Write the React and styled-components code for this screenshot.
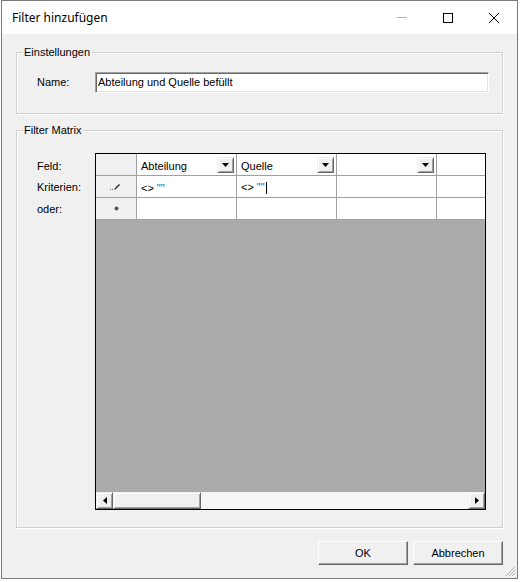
import React from 'react';
import styled, { createGlobalStyle } from 'styled-components';

const GlobalStyle = createGlobalStyle`
  html, body {
    margin: 0;
    padding: 0;
    background: #ffffff;
  }
  * { box-sizing: border-box; }
`;

const Window = styled.div`
  position: relative;
  margin-left: 1px;
  width: 517px;
  height: 579px;
  border: 1px solid #7a7a7a;
  background: #f0f0f0;
  display: flex;
  flex-direction: column;
  font-family: "Liberation Sans", Arial, sans-serif;
  font-size: 11px;
  color: #000;
`;

const TitleBar = styled.div`
  height: 33px;
  background: #ffffff;
  display: flex;
  align-items: center;
  padding-left: 10px;
`;

const Title = styled.div`
  flex: 1;
  font-family: "Noto Sans", "Open Sans", sans-serif;
  font-size: 12px;
  color: #000;
  padding-bottom: 1px;
`;

const CaptionButton = styled.div`
  width: 46px;
  height: 33px;
  display: flex;
  align-items: center;
  justify-content: center;
`;

const Content = styled.div`
  flex: 1;
  display: flex;
  flex-direction: column;
  padding: 0 14px;
`;

const Group = styled.div`
  position: relative;
  margin-top: ${p => p.$top}px;
  height: ${p => p.$height}px;
  border: 1px solid #d0d0d0;
  box-shadow: inset 1px 1px 0 #ffffff, 1px 1px 0 #ffffff;
  padding: ${p => p.$pad};
  display: flex;
`;

const Legend = styled.span`
  position: absolute;
  top: -8px;
  left: 6px;
  padding: 0 2px 0 1px;
  background: #f0f0f0;
  line-height: 14px;
`;

const Label = styled.div`
  width: 58px;
  line-height: ${p => p.$lh || 21}px;
`;

const TextInput = styled.div`
  width: 394px;
  height: 21px;
  background: #fff;
  border: 1px solid;
  border-color: #a0a0a0 #ffffff #ffffff #a0a0a0;
  box-shadow: inset 1px 1px 0 #696969, inset -1px -1px 0 #e3e3e3;
  padding: 0 0 0 2px;
  line-height: 19px;
`;

const LabelColumn = styled.div`
  display: flex;
  flex-direction: column;
  padding-top: 2px;
`;

const GridBox = styled.div`
  width: 391px;
  height: 357px;
  border: 1px solid #000;
  display: flex;
  flex-direction: column;
  overflow: hidden;
`;

const Table = styled.div`
  display: grid;
  grid-template-columns: 41px repeat(4, 100px);
  grid-auto-rows: 22px;
  background: #fff;
`;

const Cell = styled.div`
  border-right: 1px solid #a0a0a0;
  border-bottom: 1px solid #a0a0a0;
  background: ${p => (p.$header ? '#f0f0f0' : '#ffffff')};
  display: flex;
  align-items: center;
  justify-content: ${p => (p.$header ? 'center' : 'space-between')};
  padding-left: ${p => (p.$header ? 0 : 4)}px;
  white-space: nowrap;
`;

const CellText = styled.span`
  padding-top: 2px;
`;

const DropButton = styled.div`
  width: 17px;
  height: 16px;
  margin-right: 2px;
  margin-left: auto;
  background: #f0f0f0;
  border: 1px solid;
  border-color: #f0f0f0 #696969 #696969 #f0f0f0;
  box-shadow: inset 1px 1px 0 #ffffff, inset -1px -1px 0 #a0a0a0;
  display: flex;
  align-items: center;
  justify-content: center;
`;

const Quote = styled.span`
  color: #1f56d8;
  margin-left: 3px;
`;

const Caret = styled.span`
  display: inline-block;
  width: 1px;
  height: 12px;
  background: #000;
  vertical-align: middle;
  margin-left: 1px;
`;

const GrayFill = styled.div`
  flex: 1;
  background: #ababab;
`;

const ScrollBar = styled.div`
  height: 17px;
  display: flex;
  background-color: #f0f0f0;
  background-image: repeating-conic-gradient(#ffffff 0 25%, #f0f0f0 0 50%);
  background-size: 2px 2px;
`;

const Raised = styled.div`
  width: ${p => p.$w}px;
  height: 17px;
  background: #f0f0f0;
  border: 1px solid;
  border-color: #f0f0f0 #696969 #696969 #f0f0f0;
  box-shadow: inset 1px 1px 0 #ffffff, inset -1px -1px 0 #a0a0a0;
  display: flex;
  align-items: center;
  justify-content: center;
  margin-left: ${p => (p.$end ? 'auto' : 0)};
`;

const Footer = styled.div`
  margin-top: 13px;
  display: flex;
  justify-content: flex-end;
  gap: 5px;
`;

const Button = styled.button`
  width: 90px;
  height: 24px;
  font-family: "Liberation Sans", Arial, sans-serif;
  font-size: 11px;
  color: #000;
  background: #f0f0f0;
  border: 1px solid;
  border-color: #ffffff #696969 #696969 #ffffff;
  box-shadow: inset -1px -1px 0 #a0a0a0, inset 1px 1px 0 #f0f0f0;
  padding: 0;
`;

const Grip = styled.svg`
  position: absolute;
  right: 1px;
  bottom: 1px;
`;

const DownArrow = () => (
  <svg width="7" height="4" viewBox="0 0 7 4">
    <path d="M0 0h7L3.5 4z" fill="#000" />
  </svg>
);

const Arrow = ({ dir }) => (
  <svg width="4" height="7" viewBox="0 0 4 7">
    {dir === 'left' ? <path d="M4 0v7L0 3.5z" fill="#000" /> : <path d="M0 0v7l4-3.5z" fill="#000" />}
  </svg>
);

const Pencil = () => (
  <svg width="12" height="8" viewBox="0 0 12 8">
    <rect x="0" y="6" width="1" height="1" fill="#6d6d6d" />
    <rect x="2" y="6" width="1" height="1" fill="#6d6d6d" />
    <path d="M4 7 L5 5 L9 1 L10 2 L6 6 Z" fill="#303030" />
  </svg>
);

const Star = () => (
  <svg width="5" height="5" viewBox="0 0 5 5">
    <circle cx="2.5" cy="2.5" r="2" fill="#555555" />
  </svg>
);

export default function App() {
  return (
    <>
      <GlobalStyle />
      <Window>
        <TitleBar>
          <Title>Filter hinzufügen</Title>
          <CaptionButton>
            <svg width="10" height="1"><rect width="10" height="1" fill="#b4b4b4" /></svg>
          </CaptionButton>
          <CaptionButton>
            <svg width="10" height="10"><rect x="0.5" y="0.5" width="9" height="9" fill="none" stroke="#000" /></svg>
          </CaptionButton>
          <CaptionButton>
            <svg width="10" height="10"><path d="M0 0L10 10M10 0L0 10" stroke="#000" strokeWidth="1" /></svg>
          </CaptionButton>
        </TitleBar>
        <Content>
          <Group $top={18} $height={62} $pad="19px 0 0 20px">
            <Legend>Einstellungen</Legend>
            <Label>Name:</Label>
            <TextInput>Abteilung und Quelle befüllt</TextInput>
          </Group>
          <Group $top={16} $height={398} $pad="22px 0 0 20px">
            <Legend>Filter Matrix</Legend>
            <LabelColumn>
              <Label $lh={22}>Feld:</Label>
              <Label $lh={21}>Kriterien:</Label>
              <Label $lh={22}>oder:</Label>
            </LabelColumn>
            <GridBox>
              <Table>
                <Cell $header />
                <Cell><CellText>Abteilung</CellText><DropButton><DownArrow /></DropButton></Cell>
                <Cell><CellText>Quelle</CellText><DropButton><DownArrow /></DropButton></Cell>
                <Cell><DropButton><DownArrow /></DropButton></Cell>
                <Cell />

                <Cell $header><Pencil /></Cell>
                <Cell><CellText>&lt;&gt;<Quote>""</Quote></CellText></Cell>
                <Cell><CellText>&lt;&gt;<Quote>""</Quote><Caret /></CellText></Cell>
                <Cell />
                <Cell />

                <Cell $header><Star /></Cell>
                <Cell />
                <Cell />
                <Cell />
                <Cell />
              </Table>
              <GrayFill />
              <ScrollBar>
                <Raised $w={17}><Arrow dir="left" /></Raised>
                <Raised $w={88} />
                <Raised $w={17} $end><Arrow dir="right" /></Raised>
              </ScrollBar>
            </GridBox>
          </Group>
          <Footer>
            <Button>OK</Button>
            <Button>Abbrechen</Button>
          </Footer>
        </Content>
        <Grip width="12" height="12" viewBox="0 0 12 12">
          <path d="M11 2L2 11M11 5L5 11M11 8L8 11" stroke="#b0b0b0" strokeWidth="1" />
        </Grip>
      </Window>
    </>
  );
}
